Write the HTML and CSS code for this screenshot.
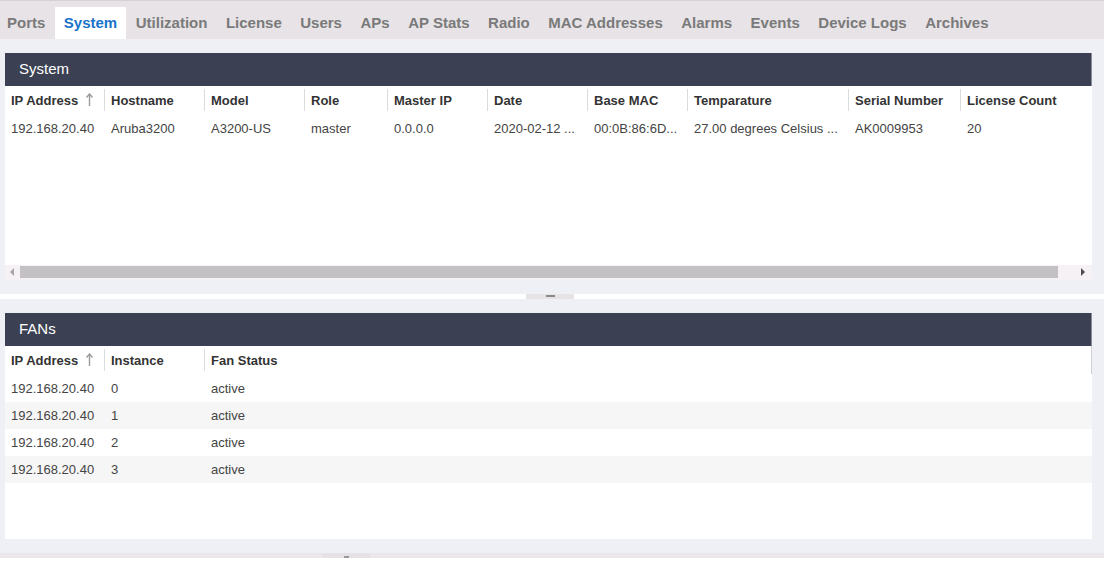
FILE: index.html
```html
<!DOCTYPE html>
<html>
<head>
<meta charset="utf-8">
<link rel="stylesheet" href="styles.css">
</head>
<body>
<div class="topbar">
  <nav class="tabs">
    <span class="tab first">Ports</span>
    <span class="tab active">System</span>
    <span class="tab">Utilization</span>
    <span class="tab">License</span>
    <span class="tab">Users</span>
    <span class="tab">APs</span>
    <span class="tab">AP Stats</span>
    <span class="tab">Radio</span>
    <span class="tab">MAC Addresses</span>
    <span class="tab">Alarms</span>
    <span class="tab">Events</span>
    <span class="tab">Device Logs</span>
    <span class="tab">Archives</span>
  </nav>
</div>

<div class="pane">
  <section class="panel sys">
    <div class="panel-title">System</div>
    <div class="grid sys-grid">
      <div class="row head">
        <div class="cell c1">IP Address <svg class="sort" width="7" height="14" viewBox="0 0 7 14"><path d="M3.5 1 L3.5 13" stroke="#9a9a9a" stroke-width="1.4"/><path d="M0.5 4.5 L3.5 1 L6.5 4.5" fill="none" stroke="#9a9a9a" stroke-width="1.4"/></svg></div>
        <div class="cell c2">Hostname</div>
        <div class="cell c3">Model</div>
        <div class="cell c4">Role</div>
        <div class="cell c5">Master IP</div>
        <div class="cell c6">Date</div>
        <div class="cell c7">Base MAC</div>
        <div class="cell c8">Temparature</div>
        <div class="cell c9">Serial Number</div>
        <div class="cell c10">License Count</div>
      </div>
      <div class="row">
        <div class="cell c1">192.168.20.40</div>
        <div class="cell c2">Aruba3200</div>
        <div class="cell c3">A3200-US</div>
        <div class="cell c4">master</div>
        <div class="cell c5">0.0.0.0</div>
        <div class="cell c6">2020-02-12 ...</div>
        <div class="cell c7">00:0B:86:6D...</div>
        <div class="cell c8">27.00 degrees Celsius ...</div>
        <div class="cell c9">AK0009953</div>
        <div class="cell c10">20</div>
      </div>
    </div>
    <div class="hscroll">
      <span class="sbtn"><svg width="5" height="8" viewBox="0 0 5 8"><path d="M4 0 L0 4 L4 8 Z" fill="#a6a6a6"/></svg></span>
      <span class="track"><span class="thumb"></span></span>
      <span class="sbtn right"><svg width="5" height="8" viewBox="0 0 5 8"><path d="M0 0 L4 4 L0 8 Z" fill="#4d4d4d"/></svg></span>
    </div>
  </section>
</div>

<div class="splitter"><span class="handle"><i class="grip"></i></span></div>

<div class="pane">
  <section class="panel fans">
    <div class="panel-title">FANs</div>
    <div class="grid fan-grid">
      <div class="row head">
        <div class="cell c1">IP Address <svg class="sort" width="7" height="14" viewBox="0 0 7 14"><path d="M3.5 1 L3.5 13" stroke="#9a9a9a" stroke-width="1.4"/><path d="M0.5 4.5 L3.5 1 L6.5 4.5" fill="none" stroke="#9a9a9a" stroke-width="1.4"/></svg></div>
        <div class="cell c2">Instance</div>
        <div class="cell c3 last">Fan Status</div>
      </div>
      <div class="row"><div class="cell c1">192.168.20.40</div><div class="cell c2">0</div><div class="cell c3">active</div></div>
      <div class="row alt"><div class="cell c1">192.168.20.40</div><div class="cell c2">1</div><div class="cell c3">active</div></div>
      <div class="row"><div class="cell c1">192.168.20.40</div><div class="cell c2">2</div><div class="cell c3">active</div></div>
      <div class="row alt"><div class="cell c1">192.168.20.40</div><div class="cell c2">3</div><div class="cell c3">active</div></div>
    </div>
  </section>
</div>

<div class="splitter bottom"><span class="handle"><i class="grip up"></i></span></div>
<div class="tail"></div>
</body>
</html>
```

FILE: styles.css
```css
* { box-sizing: border-box; }

html, body {
  margin: 0;
  padding: 0;
}

body {
  width: 1104px;
  height: 562px;
  overflow: hidden;
  background: #ffffff;
  font-family: "Liberation Sans", Arial, sans-serif;
  color: #444;
}

.topbar {
  border-top: 1px solid #d4d2d9;
  background: #e7e3e6;
  height: 39px;
  padding-top: 6px;
}

.tabs {
  display: flex;
  height: 32px;
}

.tab {
  padding: 0 9.25px;
  line-height: 32px;
  font-size: 15px;
  font-weight: bold;
  color: #7a7a7a;
  white-space: nowrap;
}

.tab.first { padding-left: 7px; }

.tab.active {
  background: #ffffff;
  color: #1a73c9;
}

.pane {
  background: #eef0f5;
  padding: 14px 12px 14px 5px;
}

.panel {
  background: #ffffff;
  display: flex;
  flex-direction: column;
}

.panel-title {
  height: 33px;
  background: #3b4052;
  color: #ffffff;
  font-size: 15px;
  line-height: 32px;
  padding-left: 14px;
  box-shadow: inset -1px 0 0 #8a8d99;
}

.grid {
  font-size: 13px;
  color: #444;
}

.sys-grid { height: 179px; }
.fan-grid { height: 193px; }

.row {
  display: flex;
  height: 27px;
  align-items: center;
}

.row.alt { background: #f6f6f6; }

.row.head {
  height: 28px;
  margin-bottom: 1px;
  font-weight: bold;
  color: #333;
}

.cell {
  flex: none;
  padding-left: 7px;
  white-space: nowrap;
  overflow: hidden;
  height: 100%;
  display: flex;
  align-items: center;
}

.cell.c1 { padding-left: 6px; }

.row.head .cell + .cell {
  background-image: linear-gradient(#dcdcdc, #dcdcdc);
  background-size: 1px 22px;
  background-position: left center;
  background-repeat: no-repeat;
}

.row.head .cell.last {
  background-image: linear-gradient(#dcdcdc, #dcdcdc), linear-gradient(#d0d0d0, #d0d0d0);
  background-size: 1px 22px, 1px 100%;
  background-position: left center, right top;
  background-repeat: no-repeat;
}

.sort { margin-left: 8px; }

.sys .c1 { width: 99px; }
.sys .c2 { width: 100px; }
.sys .c3 { width: 100px; }
.sys .c4 { width: 83px; }
.sys .c5 { width: 100px; }
.sys .c6 { width: 100px; }
.sys .c7 { width: 100px; }
.sys .c8 { width: 161px; }
.sys .c9 { width: 112px; }
.sys .c10 { flex: 1; }

.fans .c1 { width: 99px; }
.fans .c2 { width: 100px; }
.fans .c3 { flex: 1; }

.hscroll {
  height: 15px;
  display: flex;
  background: #f5f1f4;
}

.sbtn {
  width: 15px;
  display: flex;
  align-items: center;
  justify-content: center;
  padding-bottom: 1px;
}

.sbtn.right { width: 15px; justify-content: flex-end; padding-right: 6px; }

.track {
  flex: 1;
  display: flex;
  padding: 1px 0 2px;
}

.thumb {
  width: 1038px;
  background: #c3c1c4;
}

.splitter {
  height: 5px;
  background: #ffffff;
  display: flex;
  justify-content: center;
  padding-left: 0;
}

.splitter .handle {
  width: 48px;
  margin-left: -4px;
  background: #e6e3e6;
  display: flex;
  justify-content: center;
}

.grip {
  width: 9px;
  height: 2px;
  margin-top: 1px;
  background: #8a8a8a;
}

.splitter.bottom {
  background: #ebe7ea;
  justify-content: flex-start;
  padding-left: 322px;
}

.splitter.bottom .handle {
  margin-left: 0;
  background: #e5e1e4;
}

.grip.up {
  width: 5px;
  height: 2px;
  margin-top: 3px;
  background: #9a9a9a;
}

.tail {
  height: 4px;
  background: #ffffff;
}
```
